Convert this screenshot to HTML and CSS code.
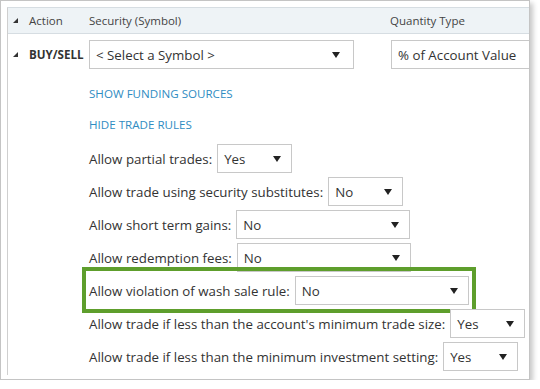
FILE: index.html
```html
<!DOCTYPE html>
<html lang="en">
<head>
    <meta charset="UTF-8">
    <meta name="viewport" content="width=device-width, initial-scale=1.0">
    <title>Trade Rules</title>
    <link rel="stylesheet" href="styles.css">
</head>
<body>
    <div class="shot">
        <div class="panel">
            <div class="grid head">
                <div class="cell first"><svg class="tri" viewBox="0 0 5 5"><polygon points="0,5 5,5 5,0"/></svg>Action</div>
                <div class="cell">Security (Symbol)</div>
                <div class="cell">Quantity Type</div>
            </div>
            <div class="grid row">
                <div class="cell first"><svg class="tri" viewBox="0 0 5 5"><polygon points="0,5 5,5 5,0"/></svg><strong>BUY/SELL</strong></div>
                <div class="cell">
                    <div class="select symbol"><span>&lt; Select a Symbol &gt;</span><svg class="arrow" viewBox="0 0 8 6"><polygon points="0,0 8,0 4,6"/></svg></div>
                </div>
                <div class="cell">
                    <div class="select qty"><span>% of Account Value</span><svg class="arrow" viewBox="0 0 8 6"><polygon points="0,0 8,0 4,6"/></svg></div>
                </div>
            </div>

            <div class="details">
                <a class="link" href="#">SHOW FUNDING SOURCES</a>
                <a class="link" href="#">HIDE TRADE RULES</a>

                <div class="rule">
                    <label>Allow partial trades:</label>
                    <div class="select short"><span>Yes</span><svg class="arrow" viewBox="0 0 8 6"><polygon points="0,0 8,0 4,6"/></svg></div>
                </div>
                <div class="rule">
                    <label>Allow trade using security substitutes:</label>
                    <div class="select short"><span>No</span><svg class="arrow" viewBox="0 0 8 6"><polygon points="0,0 8,0 4,6"/></svg></div>
                </div>
                <div class="rule">
                    <label>Allow short term gains:</label>
                    <div class="select wide"><span>No</span><svg class="arrow" viewBox="0 0 8 6"><polygon points="0,0 8,0 4,6"/></svg></div>
                </div>
                <div class="rule">
                    <label>Allow redemption fees:</label>
                    <div class="select wide"><span>No</span><svg class="arrow" viewBox="0 0 8 6"><polygon points="0,0 8,0 4,6"/></svg></div>
                </div>
                <div class="rule marked">
                    <label>Allow violation of wash sale rule:</label>
                    <div class="select wide"><span>No</span><svg class="arrow" viewBox="0 0 8 6"><polygon points="0,0 8,0 4,6"/></svg></div>
                </div>
                <div class="rule">
                    <label>Allow trade if less than the account's minimum trade size:</label>
                    <div class="select short"><span>Yes</span><svg class="arrow" viewBox="0 0 8 6"><polygon points="0,0 8,0 4,6"/></svg></div>
                </div>
                <div class="rule">
                    <label>Allow trade if less than the minimum investment setting:</label>
                    <div class="select short"><span>Yes</span><svg class="arrow" viewBox="0 0 8 6"><polygon points="0,0 8,0 4,6"/></svg></div>
                </div>
            </div>
        </div>
    </div>
</body>
</html>
```

FILE: styles.css
```css
* {
    margin: 0;
    padding: 0;
    box-sizing: border-box;
}

body {
    font-family: 'Open Sans', 'Noto Sans', sans-serif;
    font-size: 13.3px;
    color: #333;
    background: #fff;
}

.shot {
    width: 530px;
    height: 380px;
    border: 1px solid #c4c4c4;
    box-shadow: 3px 3px 5px rgba(0, 0, 0, 0.22);
    padding: 6px 0 4px 6px;
    overflow: hidden;
    background: #fff;
}

.panel {
    height: 100%;
    border-left: 1px solid #cfcfcf;
    border-top: 1px solid #d6dde2;
    overflow: hidden;
}

.grid {
    display: grid;
    grid-template-columns: 81px 301px 200px;
    align-items: center;
}

.head {
    height: 26px;
    background: #eef3f6;
    border-bottom: 1px solid #d6dde2;
    color: #444;
    font-size: 11.5px;
}

.cell {
    white-space: nowrap;
}

.first {
    display: flex;
    align-items: center;
    padding-left: 5px;
}

.tri {
    width: 5px;
    height: 5px;
    fill: #333;
    margin-right: 11px;
}

.row {
    padding-top: 6px;
}

.row strong {
    font-size: 11.6px;
    font-weight: 700;
    color: #333;
}

.select {
    display: flex;
    align-items: center;
    justify-content: space-between;
    height: 29px;
    border: 1px solid #c8c8c8;
    background: #fff;
    padding: 0 10px 0 6px;
    white-space: nowrap;
}

.arrow {
    width: 8px;
    height: 6px;
    fill: #222;
    flex: none;
}

.symbol {
    width: 265px;
    padding-right: 13px;
}

.qty {
    margin-left: 1px;
    width: 160px;
}

.short {
    width: 75px;
}

.wide {
    width: 174px;
}

.details {
    padding-left: 81px;
    padding-top: 15px;
}

.link {
    display: block;
    font-size: 11.6px;
    line-height: 20px;
    color: #2f8cc2;
    text-decoration: none;
    margin-bottom: 11px;
}

.link + .link {
    margin-bottom: 9px;
}

.rule {
    position: relative;
    display: flex;
    width: max-content;
    align-items: center;
    gap: 5px;
    margin-bottom: 4px;
    white-space: nowrap;
}

.marked::after {
    content: '';
    position: absolute;
    top: -9px;
    left: -7px;
    right: -7px;
    bottom: -8px;
    border: 4px solid #5e9e2c;
}
```
